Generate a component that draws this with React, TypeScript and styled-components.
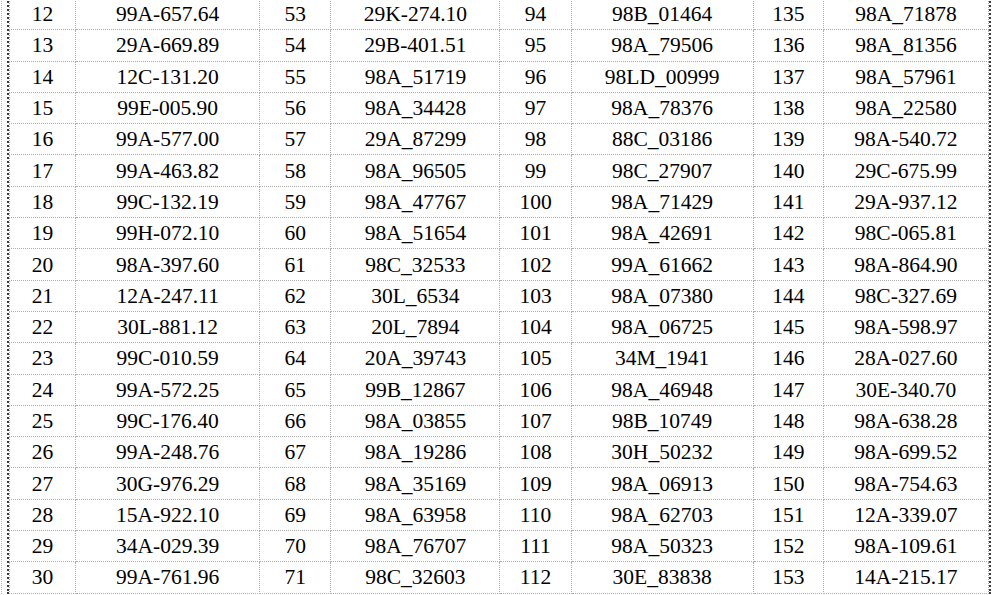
import React from 'react'
import styled, { createGlobalStyle } from 'styled-components'

const GlobalStyle = createGlobalStyle`
  html, body {
    margin: 0;
    padding: 0;
    background: #ffffff;
    overflow: hidden;
  }
`

const Sheet = styled.div`
  width: 984px;
  height: 600px;
  margin-left: 1px;
  margin-top: -2px;
  padding: 0 1px 0 5px;
  border-left: 1px dotted #b4b4b4;
  border-right: 1px dotted #b4b4b4;
`

const Frame = styled.div`
  border-left: 2px dotted #3a3a3a;
  border-right: 2px dotted #3a3a3a;
`

const Table = styled.table`
  width: 100%;
  table-layout: fixed;
  border-collapse: collapse;
  font-family: "Liberation Serif", "Times New Roman", serif;
  font-size: 21.5px;
  color: #000;
`

const Row = styled.tr`
  height: 31.3px;
`

const Cell = styled.td`
  border: 1px dotted #b0b0b0;
  padding: 0;
  text-align: center;
  line-height: 24px;
  white-space: nowrap;
`

const widths = [66, 184, 71, 169, 71, 182, 70, 165]

const colA = ['99A-657.64', '29A-669.89', '12C-131.20', '99E-005.90', '99A-577.00', '99A-463.82', '99C-132.19', '99H-072.10', '98A-397.60', '12A-247.11', '30L-881.12', '99C-010.59', '99A-572.25', '99C-176.40', '99A-248.76', '30G-976.29', '15A-922.10', '34A-029.39', '99A-761.96']
const colB = ['29K-274.10', '29B-401.51', '98A_51719', '98A_34428', '29A_87299', '98A_96505', '98A_47767', '98A_51654', '98C_32533', '30L_6534', '20L_7894', '20A_39743', '99B_12867', '98A_03855', '98A_19286', '98A_35169', '98A_63958', '98A_76707', '98C_32603']
const colC = ['98B_01464', '98A_79506', '98LD_00999', '98A_78376', '88C_03186', '98C_27907', '98A_71429', '98A_42691', '99A_61662', '98A_07380', '98A_06725', '34M_1941', '98A_46948', '98B_10749', '30H_50232', '98A_06913', '98A_62703', '98A_50323', '30E_83838']
const colD = ['98A_71878', '98A_81356', '98A_57961', '98A_22580', '98A-540.72', '29C-675.99', '29A-937.12', '98C-065.81', '98A-864.90', '98C-327.69', '98A-598.97', '28A-027.60', '30E-340.70', '98A-638.28', '98A-699.52', '98A-754.63', '12A-339.07', '98A-109.61', '14A-215.17']

const groups = [
  { start: 12, plates: colA },
  { start: 53, plates: colB },
  { start: 94, plates: colC },
  { start: 135, plates: colD },
]

export default function App() {
  return (
    <>
      <GlobalStyle />
      <Sheet>
        <Frame>
          <Table>
            <colgroup>
              {widths.map((w, i) => (
                <col key={i} style={{ width: w }} />
              ))}
            </colgroup>
            <tbody>
              {colA.map((_, r) => (
                <Row key={r}>
                  {groups.map((g) => (
                    <React.Fragment key={g.start}>
                      <Cell>{g.start + r}</Cell>
                      <Cell>{g.plates[r]}</Cell>
                    </React.Fragment>
                  ))}
                </Row>
              ))}
            </tbody>
          </Table>
        </Frame>
      </Sheet>
    </>
  )
}
